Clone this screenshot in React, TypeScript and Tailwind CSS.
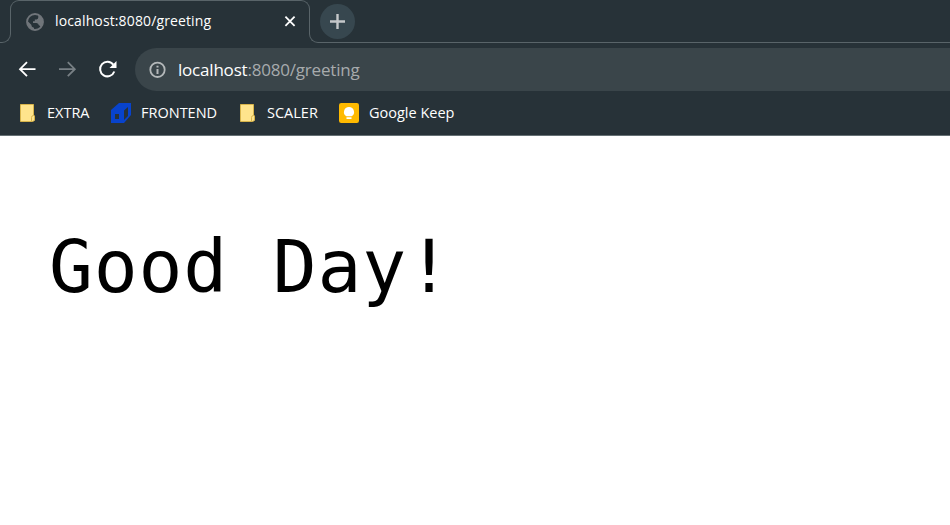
import type { ReactNode } from "react";

const uiFont = "font-['Open_Sans','Noto_Sans',sans-serif]";

function Globe() {
  return (
    <svg width="18" height="18" viewBox="0 0 18 18">
      <circle cx="9" cy="9" r="8" fill="#273238" stroke="#70757a" strokeWidth="1.8" />
      <path d="M9 1A8 8 0 0 1 14.6 14.8Q14.6 12.6 12.9 12.2Q12.4 10 10.5 9.9H7V8.2H8.8V6.4H10.6Q12.3 6 12.3 4.2V2Z" fill="#70757a" />
      <path d="M1.1 7.6L5.5 12V13Q5.8 14.4 8 14.7V17Q1 15.5 1.1 7.6Z" fill="#70757a" />
    </svg>
  );
}

function Folder() {
  return (
    <svg width="20" height="20" viewBox="0 0 20 20">
      <path d="M1.5 1.5H14.5V12L15.5 13V17.5L13.5 18.5H1.5Z" fill="#ffe48c" stroke="#d8b44a" />
      <path d="M12.5 18V14.5Q12.5 12.5 14.5 12.5" fill="none" stroke="#d8b44a" />
    </svg>
  );
}

function Cube() {
  return (
    <svg width="20" height="20" viewBox="0 0 20 20">
      <path d="M8 0H20V12L13 20H0V7Z" fill="#0843cc" />
      <path d="M13 7.5L17 4V13L13 17Z" fill="#273238" />
      <rect x="4" y="11" width="4" height="5" fill="#273238" shapeRendering="crispEdges" />
    </svg>
  );
}

function Keep() {
  return (
    <svg width="20" height="20" viewBox="0 0 20 20">
      <rect width="20" height="20" rx="2.2" fill="#ffba00" />
      <path d="M10 4A5 5 0 0 0 7.4 13.3H12.6A5 5 0 0 0 10 4ZM7.5 14.2H12.5V16H7.5Z" fill="#fff" />
    </svg>
  );
}

function Bookmark({ icon, children, className }: { icon: ReactNode; children: ReactNode; className: string }) {
  return (
    <div className={`flex shrink-0 items-center ${className}`}>
      <span className="shrink-0">{icon}</span>
      <span className="whitespace-nowrap">{children}</span>
    </div>
  );
}

export default function App() {
  return (
    <div className={`flex h-[525px] w-[950px] flex-col overflow-hidden bg-white ${uiFont}`}>
      <header className="flex h-[136px] shrink-0 flex-col border-b border-[#657074] bg-[#273238] text-white">
        <div className="flex h-[43px] items-end">
          <div className="h-[20px] w-[11px] rounded-br-[9px] border-r border-b border-[#596469]" />
          <div className="relative -ml-px flex h-[43px] w-[300px] items-center pl-4">
            <div className="absolute inset-x-0 top-0 h-[24px] rounded-t-[9px] border-x border-t border-[#596469]" />
            <Globe />
            <span className="-mt-[2px] ml-[11px] w-[226px] text-[14px] leading-[20px] tracking-[0.13px] whitespace-nowrap">localhost:8080/greeting</span>
            <svg className="-mt-px shrink-0" width="18" height="18" viewBox="0 0 18 18">
              <path d="M4.4 4.7L13.6 13.9M13.6 4.7L4.4 13.9" stroke="#fff" strokeWidth="1.8" />
            </svg>
          </div>
          <div className="-ml-px flex h-[43px] grow items-end">
            <div className="h-[20px] w-[20px] rounded-bl-[9px] border-b border-l border-[#596469]" />
            <div className="flex h-[43px] grow items-start border-b border-[#596469]">
              <div className="-ml-[9px] mt-[4px] flex h-[35px] w-[35px] items-center justify-center rounded-full bg-[#37474f]">
                <svg width="17" height="17" viewBox="0 0 17 17">
                  <path d="M8.5 1V16M1 8.5H16" stroke="#c5c8ca" strokeWidth="2.4" />
                </svg>
              </div>
            </div>
          </div>
        </div>

        <div className="mt-[5px] flex h-[43px] shrink-0 items-center pl-[18px]">
          <svg width="20" height="20" viewBox="0 0 20 20" fill="none" stroke="#fff" strokeWidth="1.8">
            <path d="M17.5 9.2H2.5M9 2.2L2 9.2L9 16.2" />
          </svg>
          <svg className="ml-5" width="20" height="20" viewBox="0 0 20 20" fill="none" stroke="#788085" strokeWidth="1.8">
            <path d="M1 9.2H16.5M9.8 2.2L16.8 9.2L9.8 16.2" />
          </svg>
          <svg className="ml-5" width="20" height="20" viewBox="0 0 20 20">
            <path d="M15.3 4.7A7.3 7.3 0 1 0 16.3 11.5" fill="none" stroke="#fff" strokeWidth="2" />
            <path d="M18.5 1V8H11.5Z" fill="#fff" />
          </svg>
          <div className="ml-[17px] flex h-[43px] grow items-center rounded-l-full bg-[#3a454a] pl-[14px]">
            <svg width="18" height="18" viewBox="0 0 18 18">
              <circle cx="8.5" cy="8.8" r="7.2" fill="none" stroke="#b4b8ba" strokeWidth="1.8" />
              <path d="M8.5 8V13M8.5 4.7V6.5" stroke="#b4b8ba" strokeWidth="2" />
            </svg>
            <span className="ml-[11px] text-[17px] leading-[24px] tracking-[-0.2px] whitespace-nowrap">
              localhost<span className="text-[#a7abad]">:8080/greeting</span>
            </span>
          </div>
        </div>

        <div className="flex h-[44px] shrink-0 items-center pl-[19px] text-[14.5px] leading-[20px]">
          <Bookmark icon={<Folder />} className="w-[92px] gap-[8px]">EXTRA</Bookmark>
          <Bookmark icon={<Cube />} className="w-[128px] gap-[10px]">FRONTEND</Bookmark>
          <Bookmark icon={<Folder />} className="w-[100px] gap-[8px]">SCALER</Bookmark>
          <Bookmark icon={<Keep />} className="gap-[10px]">Google Keep</Bookmark>
        </div>
      </header>
      <main className="pt-[91px] pl-[49px]">
        <h1 className="font-['DejaVu_Sans_Mono',monospace] text-[73px] leading-[80px] tracking-[0.8px] whitespace-nowrap text-black">Good Day!</h1>
      </main>
    </div>
  );
}
